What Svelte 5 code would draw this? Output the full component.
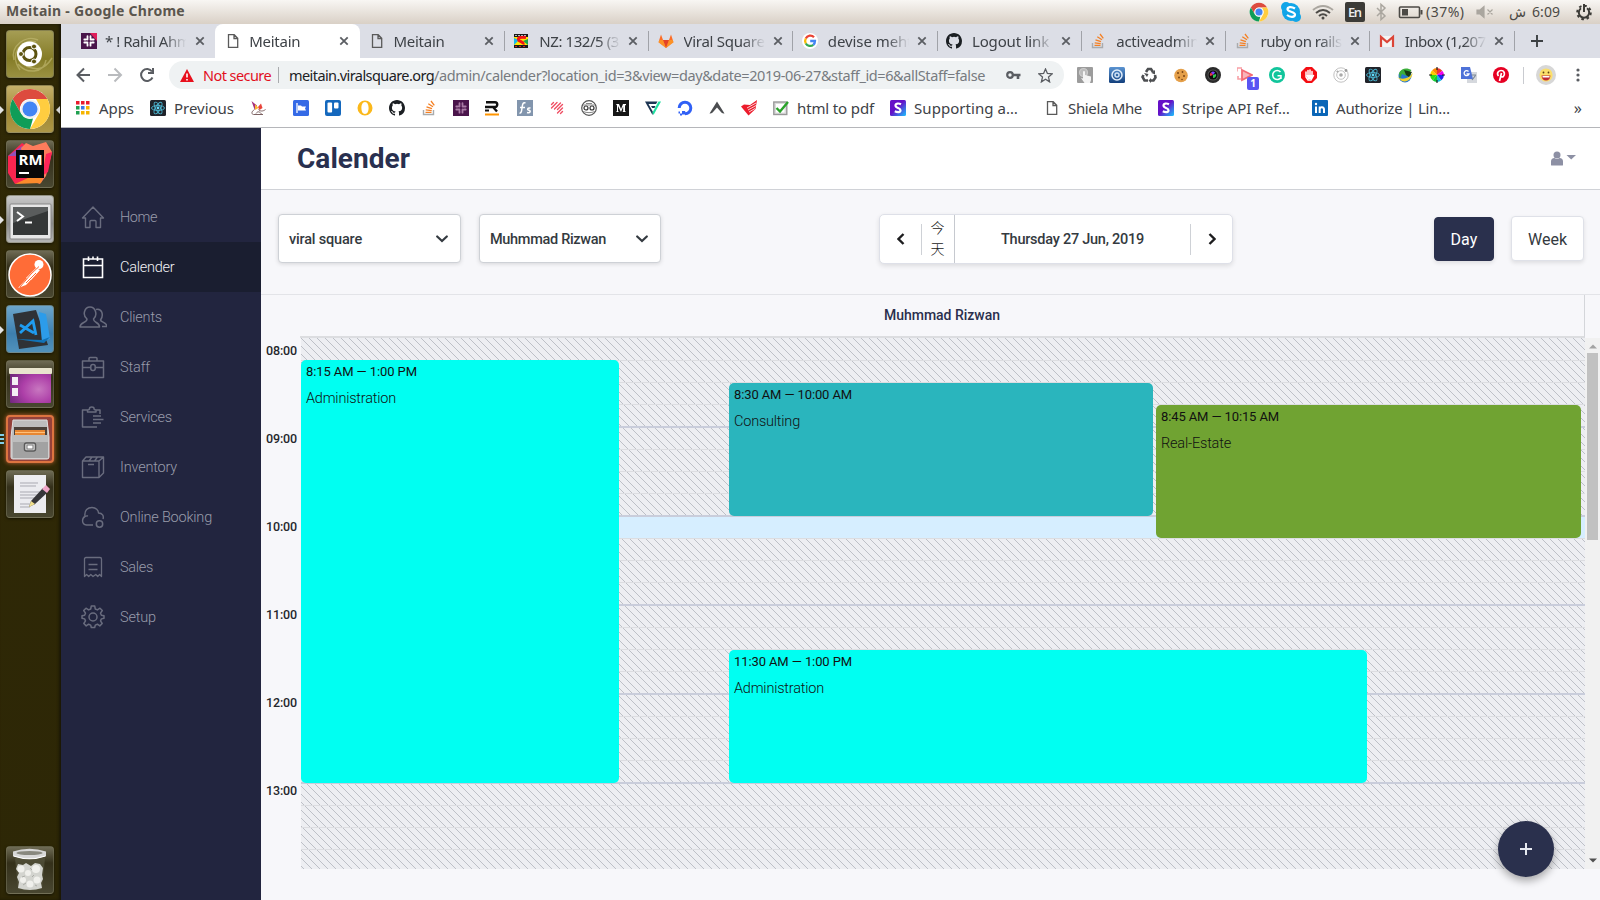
<script>
  // Spreads a label over a fixed width with letter spacing.
  function fit(node, width) {
    node.style.letterSpacing = '0px';
    const n = [...node.textContent].length;
    const natural = node.getBoundingClientRect().width;
    node.style.letterSpacing = (width - natural) / n + 'px';
  }

  const tabs = [
    { icon: 'slack', text: '* ! Rahil Ahmed', w: 102 },
    { icon: 'page', text: 'Meitain', w: 51, active: true },
    { icon: 'page', text: 'Meitain', w: 51 },
    { icon: 'sony', text: 'NZ: 132/5 (32)', w: 92 },
    { icon: 'gitlab', text: 'Viral Square /', w: 90 },
    { icon: 'google', text: 'devise mehtod', w: 103 },
    { icon: 'github', text: 'Logout link', w: 77 },
    { icon: 'so', text: 'activeadmin', w: 83 },
    { icon: 'so', text: 'ruby on rails -', w: 89 },
    { icon: 'gmail', text: 'Inbox (1,207)', w: 85 }
  ];

  const marks = [
    { x: 150, icon: 'react', text: 'Previous', tx: 174, w: 60 },
    { x: 250, icon: 'bird' }, { x: 293, icon: 'flag' }, { x: 325, icon: 'trello' },
    { x: 357, icon: 'ring' }, { x: 389, icon: 'github' }, { x: 421, icon: 'so' },
    { x: 453, icon: 'slack2' }, { x: 484, icon: 'rr' }, { x: 517, icon: 'fs' },
    { x: 549, icon: 'scratch' }, { x: 581, icon: 'face' }, { x: 613, icon: 'medium' },
    { x: 645, icon: 'vf' }, { x: 677, icon: 'ocean' }, { x: 709, icon: 'chev' },
    { x: 741, icon: 'redbird' },
    { x: 773, icon: 'check', text: 'html to pdf', tx: 797, w: 77 },
    { x: 890, icon: 'stripe', text: 'Supporting a…', tx: 914, w: 104 },
    { x: 1044, icon: 'page', text: 'Shiela Mhe', tx: 1068, w: 74 },
    { x: 1158, icon: 'stripe', text: 'Stripe API Ref…', tx: 1182, w: 108 },
    { x: 1312, icon: 'in', text: 'Authorize | Lin…', tx: 1336, w: 114 }
  ].map((m, i, a) => {
    const prev = a[i - 1];
    const end = prev ? (prev.text ? prev.tx + prev.w : prev.x + 16) : 134;
    return { ...m, gap: m.x - end };
  });

  const exts = ['hand', 'swirl', 'recycle', 'cookie', 'lens', 'capture', 'grammarly', 'stop', 'orbit', 'react', 'globe', 'wheel', 'translate', 'pin'];

  const nav = [
    { icon: 'home', text: 'Home', w: 37 },
    { icon: 'cal', text: 'Calender', w: 54.5, active: true },
    { icon: 'clients', text: 'Clients', w: 42 },
    { icon: 'staff', text: 'Staff', w: 30 },
    { icon: 'services', text: 'Services', w: 52 },
    { icon: 'inventory', text: 'Inventory', w: 57 },
    { icon: 'online', text: 'Online Booking', w: 92 },
    { icon: 'sales', text: 'Sales', w: 33 },
    { icon: 'setup', text: 'Setup', w: 36 }
  ];

  const launcher = ['ubuntu', 'chrome', 'rubymine', 'terminal', 'postman', 'vscode', 'workspace', 'files', 'gedit'];
  const hours = ['08:00', '09:00', '10:00', '11:00', '12:00', '13:00'];

  const events = [
    { x: 0, y: 22, w: 318, h: 423, color: '#00fff2', time: '8:15 AM — 1:00 PM', tw: 111, name: 'Administration', nw: 90 },
    { x: 428, y: 45, w: 424, h: 133, color: '#2ab5bd', time: '8:30 AM — 10:00 AM', tw: 118, name: 'Consulting', nw: 66 },
    { x: 855, y: 67, w: 425, h: 133, color: '#70a332', time: '8:45 AM — 10:15 AM', tw: 118, name: 'Real-Estate', nw: 70 },
    { x: 428, y: 312, w: 638, h: 133, color: '#00fff2', time: '11:30 AM — 1:00 PM', tw: 118, name: 'Administration', nw: 90 }
  ];
</script>

{#snippet chromeLogo()}
  <circle cx="24" cy="24" r="20" fill="#fff" />
  <path d="M6.7 14A20 20 0 0 1 41.3 14H24A10 10 0 0 0 15.3 29Z" fill="#dd4b3e" />
  <path d="M41.3 14A20 20 0 0 1 24 44L32.7 29A10 10 0 0 0 32.700 19L30 14Z" fill="#ffcd40" />
  <path d="M24 44A20 20 0 0 1 6.7 14L15.3 29A10 10 0 0 0 27 33.500Z" fill="#0f9d58" />
  <circle cx="24" cy="24" r="9.500" fill="#f1f1f1" />
  <circle cx="24" cy="24" r="7.500" fill="#4285f4" />
{/snippet}

{#snippet slackMark(c)}
  <g stroke={c} stroke-width="1.800" stroke-linecap="round">
    <path d="M6.500 3.200V6.500M3.300 6.500H5M9.500 3.200V5M9.500 6.500H12.700M3.300 9.500H6.500M6.500 11V12.700M11 9.500H12.700M9.500 9.500V12.700" />
  </g>
{/snippet}

{#snippet glyph(name)}
  <svg class="g16" viewBox="0 0 16 16" fill="none">
    {#if name === 'slack'}
      <rect width="16" height="16" fill="#4a154b" /><path d="M9 0H16V8Z" fill="#e01e5a" />
      {@render slackMark('#fff')}
    {:else if name === 'slack2'}
      <rect width="16" height="16" fill="#4a154b" />
      {@render slackMark('#a97ba5')}
    {:else if name === 'page'}
      <path d="M3.500 1.700H9.200L12.700 5.200V14.300H3.500Z M9 1.700V5.500H12.700" stroke="#5a5a5a" stroke-width="1.300" />
    {:else if name === 'sony'}
      <rect x="1" y="1" width="14" height="14" fill="#1a1a1a" /><rect x="1" y="4" width="14" height="8" fill="#ffe600" />
      <path d="M1 5L6 7L1 12Z" fill="#19b8e8" /><path d="M15 12L10 8L15 6Z" fill="#19a850" />
      <path d="M13 4.500C7 3.500 4 5 6 7.500C8 9 11 9 10 11.500" stroke="#f21515" stroke-width="3" />
      <path d="M2 2.500H14" stroke="#bbb" stroke-dasharray="2 1" /><path d="M2 13.500H14" stroke="#c22" stroke-dasharray="2 2" />
    {:else if name === 'gitlab'}
      <path d="M8 15L.5 9.300L3 1.500L5 7H11L13 1.500L15.500 9.300Z" fill="#fc6d26" />
      <path d="M8 15L5 7H11Z" fill="#e24329" /><path d="M.5 9.300L1.500 7H5L8 15ZM15.500 9.300L14.500 7H11L8 15Z" fill="#fca326" opacity=".7" />
    {:else if name === 'google'}
      <circle cx="8" cy="8" r="8" fill="#fff" />
      <g stroke-width="2.300"><path d="M12 4.200A5 5 0 0 0 3.800 5.500" stroke="#ea4335" /><path d="M3.800 5.500A5 5 0 0 0 3.800 10.500" stroke="#fbbc05" /><path d="M3.800 10.500A5 5 0 0 0 11.300 11.800" stroke="#34a853" /><path d="M11.300 11.800A5 5 0 0 0 13 8H8.200" stroke="#4285f4" /></g>
    {:else if name === 'github'}
      <path fill="#1b1f23" d="M8 0C3.580 0 0 3.580 0 8c0 3.540 2.290 6.530 5.470 7.590.4.070.55-.17.55-.38v-1.490c-2.010.37-2.530-.49-2.690-.94-.09-.23-.48-.94-.82-1.130-.28-.15-.68-.52-.01-.53.63-.01 1.080.58 1.230.82.72 1.210 1.870.87 2.330.66.07-.52.28-.87.51-1.070-1.780-.2-3.640-.89-3.640-3.950 0-.87.31-1.590.82-2.150-.08-.2-.36-1.020.08-2.120 0 0 .67-.21 2.200.82a7.600 7.600 0 0 1 4 0c1.530-1.040 2.200-.82 2.200-.82.44 1.100.16 1.920.08 2.120.51.56.82 1.270.82 2.150 0 3.070-1.870 3.750-3.650 3.950.29.25.54.73.54 1.480v2.200c0 .21.150.46.550.38A8 8 0 0 0 16 8c0-4.420-3.580-8-8-8Z" />
    {:else if name === 'so'}
      <path d="M2.500 10V14.500H12.500V10" stroke="#a9abad" stroke-width="1.400" />
      <path d="M4.500 12.300H10.500M4.700 9.800L10.700 10.600M5.500 6.900L11 8.700M7.300 3.700L12 6.800M10 1L13.300 5.300" stroke="#f48024" stroke-width="1.300" />
    {:else if name === 'gmail'}
      <rect x="1" y="3" width="14" height="11" fill="#f4f4f4" /><path d="M2 14V3.800L8 9L14 3.800V14" stroke="#db4437" stroke-width="2.200" />
    {:else if name === 'react'}
      <rect width="16" height="16" rx="1.500" fill="#20232a" />
      <g stroke="#4cb4cf" stroke-width=".9"><ellipse cx="8" cy="8" rx="6.500" ry="2.500" /><ellipse cx="8" cy="8" rx="6.500" ry="2.500" transform="rotate(60 8 8)" /><ellipse cx="8" cy="8" rx="6.500" ry="2.500" transform="rotate(120 8 8)" /></g>
      <circle cx="8" cy="8" r="1.400" fill="#61dafb" />
    {:else if name === 'bird'}
      <path d="M1.500 1L7 5.500L4.500 9.500Z" fill="#a5307e" /><path d="M5 4L8.500 8L5 10Z" fill="#fbb634" /><path d="M8 7L11 3.500L12.500 8L9.500 10Z" fill="#e8443a" />
      <path d="M4.500 9.500C1.500 11.500 1 14 3.500 14.500H13M8.500 9.500C10 11.500 13 11.500 15.500 9.500M6 13.500C8 10.500 10 12 11.500 14" stroke="#7d6262" stroke-width="1" />
    {:else if name === 'flag'}
      <rect width="16" height="16" rx="1.500" fill="#356ae6" /><path d="M4 3V13" stroke="#fff" stroke-width="1.300" /><path d="M5 5.500H8L9 6.500H13L12 8.500L13 10.500H5Z" fill="#fff" />
    {:else if name === 'trello'}
      <rect width="16" height="16" rx="2" fill="#1468bd" /><rect x="2.500" y="2.500" width="4.600" height="10" rx="1" fill="#fff" /><rect x="9" y="2.500" width="4.500" height="6" rx="1" fill="#fff" />
    {:else if name === 'ring'}
      <path fill-rule="evenodd" d="M8 .5A7.500 7.500 0 1 0 8 15.500A7.500 7.500 0 1 0 8 .5ZM8 2C10.500 2 11.600 5 11.600 8S10.500 14 8 14S4.400 11 4.400 8S5.500 2 8 2Z" fill="#fbb81b" />
    {:else if name === 'rr'}
      <path d="M2 2.200H11C14 2.200 14 7 11 7H1M9 7L13 11.500" stroke="#111" stroke-width="2.400" /><path d="M1 10.500H5" stroke="#111" stroke-width="2" /><path d="M1 14.500H15" stroke="#ff9500" stroke-width="2" />
    {:else if name === 'fs'}
      <rect width="16" height="16" fill="#8295ad" /><path d="M8.500 3C6 2 5.500 4 5 8S4 13.500 2.500 13M3 7.500H8M13.500 8C10 7.500 10 10 12 10.300S13.500 13.500 10 12.600" stroke="#fff" stroke-width="1.500" />
    {:else if name === 'scratch'}
      <g stroke="#ef4e63" stroke-width="1.400" stroke-linecap="round"><path d="M2.500 4.500L4.500 2.500M2.500 8L8 2.500M5.500 9L11.500 3M8.500 9.500L13.500 4.500M8.500 13L13.500 8M11.500 13.500L13.500 11.500" /></g>
    {:else if name === 'face'}
      <circle cx="8" cy="8" r="7.300" stroke="#555" stroke-width="1.200" /><path d="M2 5H14M2 11.500C6 13 10 13 14 11.500M5 3.500H11" stroke="#888" /><circle cx="5" cy="8" r="2" stroke="#333" stroke-width="1.200" /><circle cx="11" cy="8" r="2" stroke="#333" stroke-width="1.200" />
    {:else if name === 'medium'}
      <rect width="16" height="16" fill="#161616" /><path d="M3 4H6L8 9L10 4H13V5L12 5.500V11L13 12H9.500L10.200 11V6.500L8 12L5 6V11L6 12H3L4 11V5.500Z" fill="#fff" />
    {:else if name === 'vf'}
      <path d="M0 1.500H12.500L11 4H3.500L8 12L7.500 15Z" fill="#1c3553" /><path d="M6 6H10.500L9.500 8H7.200Z" fill="#1c3553" /><path d="M13.500 1.500H16L8.500 15L7.500 12.500Z" fill="#1ee0a0" />
    {:else if name === 'ocean'}
      <path d="M2.200 8A5.800 5.800 0 1 1 8 13.800" stroke="#3060f6" stroke-width="3" /><path d="M5 11H8.200V14.500H5ZM3 13.500H5V15.500H3ZM1.500 11.500H3V13.500H1.500Z" fill="#3060f6" />
    {:else if name === 'chev'}
      <path d="M8 1.500L15.500 13.500Q13 14 11.500 11.500L8 7.500L4.500 11.500Q3 14 .5 13.500Z" fill="#4b4d50" />
    {:else if name === 'redbird'}
      <path d="M0 6.500L3 4.500L9 5L16 0L14.500 9L7.500 15.500Z" fill="#ec1c2c" /><path d="M6 8L15 3M7 10L15 5.500M8 12L14 8.500" stroke="#fff" stroke-width=".8" />
    {:else if name === 'check'}
      <rect x=".8" y="2" width="13" height="12.500" fill="#dcdcdc" stroke="#999" stroke-width="1.400" /><rect x="3" y="4" width="8.500" height="8.500" fill="#fff" /><path d="M3.500 8L7 11.500L15 2" stroke="#29a329" stroke-width="2.400" />
    {:else if name === 'stripe'}
      <rect width="16" height="16" rx="1.500" fill="url(#stripeG)" /><path d="M11 4.300C8.500 3 5.500 3.300 5.500 5.600C5.500 8.500 10.500 7.500 10.500 10.200C10.500 12.500 7.500 12.600 4.800 11.300" stroke="#fff" stroke-width="2.200" />
    {:else if name === 'in'}
      <rect width="16" height="16" rx="1" fill="#0a66b7" /><path d="M4 6.500V13M7.700 13V6.500M7.700 9C8 6.500 12 6.500 12 9.500V13" stroke="#fff" stroke-width="2" /><circle cx="4" cy="4" r="1.200" fill="#fff" />
    {:else if name === 'hand'}
      <rect width="16" height="16" rx="1" fill="#9c9c9c" /><circle cx="6.500" cy="5.500" r="4" fill="#bbb" stroke="#ccc" stroke-width="1.200" /><path d="M6 4.500Q7 3.500 8 4.500V8L14 9.500V13L13 16H7.500L4 11L6 11.500Z" fill="#f4f4f4" />
    {:else if name === 'swirl'}
      <rect width="16" height="16" rx="1.500" fill="url(#swirlG)" /><circle cx="8" cy="8" r="5" stroke="#e2eefa" stroke-width="1.500" /><circle cx="8" cy="8" r="2" stroke="#cfe2f5" stroke-width="1.500" />
    {:else if name === 'recycle'}
      <path d="M5 5L7 2H10L12 5M2.500 8L1.500 10L3.500 13.500H7M14 8L14.500 10.500L12.500 13.500H10" stroke="#4d4f52" stroke-width="2.600" /><path d="M3 6L7.500 7L6 10ZM10.500 6L14 3L14 7.500ZM10 11V16L7.500 13.500Z" fill="#4d4f52" />
    {:else if name === 'cookie'}
      <circle cx="8" cy="8.500" r="6.800" fill="#e5a04a" /><g fill="#7b4513"><circle cx="5" cy="6" r="1" /><circle cx="9.500" cy="5" r=".9" /><circle cx="11" cy="9" r="1" /><circle cx="6" cy="10.500" r="1" /><circle cx="9" cy="12.500" r=".8" /></g>
    {:else if name === 'lens'}
      <circle cx="8" cy="8" r="8" fill="#2a2a2a" /><circle cx="8" cy="8" r="5.500" fill="#555" /><circle cx="8" cy="8" r="4.500" fill="#0c0c0c" /><path d="M8 8L6 5.500A3 3 0 0 1 10 5.500Z" fill="#7d3cff" /><path d="M8 8L11 7A3 3 0 0 1 8 11Z" fill="#33c950" /><path d="M8 8L5 9A3 3 0 0 1 6 5.500Z" fill="#ed3a48" />
    {:else if name === 'capture'}
      <path d="M0 4.500V1H5M1 9V12H4" stroke="#f8a0a6" stroke-width="1.600" /><path d="M5 3L15 8L5 13Z" stroke="#f46a75" stroke-width="1.800" fill="#f46a75" fill-opacity=".5" />
    {:else if name === 'grammarly'}
      <circle cx="8" cy="8" r="8" fill="#11c59b" /><path d="M11.500 5A4.500 4.500 0 1 0 12 10.500M8.500 8.800H12V12" stroke="#fff" stroke-width="1.500" />
    {:else if name === 'stop'}
      <path d="M5 0H11L16 5V11L11 16H5L0 11V5Z" fill="#f40d12" /><path d="M5 5V10L7 13H10L12.500 8.500M7 3.500V9M9 3V9M11 4.500V9" stroke="#fff" stroke-width="1.500" stroke-linecap="round" /><path d="M5 8H11V12H7Z" fill="#fff" />
    {:else if name === 'orbit'}
      <circle cx="8" cy="8" r="7.200" stroke="#c2c2c2" stroke-width="1" /><circle cx="8" cy="8" r="4.300" stroke="#c2c2c2" stroke-width="1" /><circle cx="8" cy="8" r="1.800" fill="#aaa" /><circle cx="13" cy="3.500" r="1.400" fill="#999" /><circle cx="4.500" cy="4.500" r="1.100" fill="#aaa" />
    {:else if name === 'globe'}
      <circle cx="8" cy="9" r="6.500" fill="#2677d0" /><path d="M2 6C5 0 11 1 14.500 3L10 9L5 7L3 12Z" fill="#3bae3a" /><path d="M0 10C5 13 12 12 15.500 6C15.500 11 10 16 5 14Z" fill="#f3d32d" /><path d="M7 3L15 5L12 10L9 8Z" fill="#173b10" />
    {:else if name === 'wheel'}
      <g transform="translate(1 1) scale(.875)"><path d="M8 8V0A8 8 0 0 1 14 3Z" fill="#e33" /><path d="M8 8L14 3A8 8 0 0 1 16 8Z" fill="#e0e" /><path d="M8 8H16A8 8 0 0 1 13 14Z" fill="#22e" /><path d="M8 8L13 14A8 8 0 0 1 8 16Z" fill="#1bd" /><path d="M8 8V16A8 8 0 0 1 3 14Z" fill="#1c3" /><path d="M8 8L3 14A8 8 0 0 1 0 8Z" fill="#3d1" /><path d="M8 8H0A8 8 0 0 1 2.500 2.500Z" fill="#fc0" /><path d="M8 8L2.500 2.500A8 8 0 0 1 8 0Z" fill="#f80" /></g><path d="M0 8H3M13 8H16M8 0V3M8 13V16" stroke="#222" stroke-width="1.200" />
    {:else if name === 'translate'}
      <rect x="6" y="5" width="10" height="11" fill="#d5d8dd" /><path d="M0 0H9L12 12H0Z" fill="#4e72d8" /><path d="M7.500 4.500A2.500 2.500 0 1 0 8 7H5.500" stroke="#fff" stroke-width="1.300" /><path d="M10.500 8H15M11 13L14.500 8.500" stroke="#7b8796" stroke-width="1.200" />
    {:else if name === 'pin'}
      <circle cx="8" cy="8" r="8" fill="#e60023" /><path d="M5.500 9C3 6 6 3.300 8.500 3.500C12 3.700 12 8 10.300 9.500C9 10.500 7.800 9.600 7.800 9M8.500 6L6.500 14" stroke="#fff" stroke-width="1.700" />
    {/if}
  </svg>
{/snippet}

{#snippet navIcon(name)}
  <svg class="nico" viewBox="0 0 28 24" fill="none" stroke="currentColor" stroke-width="1.600" stroke-linejoin="round">
    {#if name === 'home'}
      <path d="M3.500 13L14 2L24.500 13H21.500V22.500H17V16.500Q17 15.500 16 15.500H12Q11 15.500 11 16.500V22.500H6.500V13Z" stroke-width="1.400" />
    {:else if name === 'cal'}
      <path d="M4.500 4H23.500V22.500H4.500ZM4.500 10.500H23.500M9.500 1.500V6M14 1.500V4M18.500 1.500V6" stroke-linejoin="miter" />
    {:else if name === 'clients'}
      <path d="M8 14C3 10 5.500 2 11 2S19 10 14.500 14C14.500 18 20.500 17 20.500 22H1C1 17 8 18 8 14ZM17 4.500C23 3 25 10 21.500 15C22 17.500 27.500 17 28 21.500H23" stroke-width="1.500" />
    {:else if name === 'staff'}
      <path d="M3.500 6H24.500V22.500H3.500ZM10 6V3.500Q10 2.500 11 2.500H17Q18 2.500 18 3.500V6M3.500 12.500H11.500M16.500 12.500H24.500" stroke-width="1.500" /><rect x="11.800" y="9.500" width="4.400" height="6" rx="2" stroke-width="1.500" />
    {:else if name === 'services'}
      <path d="M18 22H3.500V5H9M16 5H21V9M8.500 7H17V5Q15 5 15 3.500Q15 2 12.800 2T10.500 3.500Q10.500 5 8.500 5ZM14 11H22M14 14.500H24.500M14 18H22" stroke-width="1.500" />
    {:else if name === 'inventory'}
      <path d="M3.500 6H20V22.500H3.500ZM3.500 6L7 2H24.500L20 6M24.500 2V18L20 22.500M10 6L13 2M15.500 6L18.500 2M9 9.500H15" stroke-width="1.400" />
    {:else if name === 'online'}
      <path d="M14 20H7.500C2 19 3 13 6 11.500C5 5 9 2.500 13 2.500S19.500 5.500 19.500 8C23.500 8 25 11 24 14" stroke-width="1.400" /><circle cx="20.500" cy="19" r="3.200" stroke-width="1.500" /><path d="M6 11.500Q7.500 10.500 9 11" stroke-width="1.400" />
    {:else if name === 'sales'}
      <path d="M5.500 21.500V4Q5.500 2.500 7 2.500H21Q22.500 2.500 22.500 4V21.500L20.600 19.500L18.700 21.500L16.800 19.500L14 21.500L11.800 19.500L9.700 21.500L7.600 19.500ZM9.500 9.500H18.500M9.500 14.500H18.500" stroke-width="1.300" />
    {:else if name === 'setup'}
      <path d="M12.300 2H15.700L16.300 5L18.400 5.900L21 4.200L23.300 6.500L21.500 9.200L22.400 11.300L25 11.800V14.200L22.400 14.900L21.500 16.900L23.200 19.500L20.800 21.900L18.400 20.200L16.300 21.100L15.700 23.500H12.300L11.700 21.100L9.600 20.200L7.200 21.900L4.800 19.500L6.500 16.900L5.600 14.900L3 14.200V11.800L5.600 11.300L6.500 9.200L4.700 6.500L7 4.200L9.600 5.900L11.700 5Z" stroke-width="1.500" transform="translate(0 -1)" /><circle cx="14" cy="12" r="4" stroke-width="1.500" />
    {/if}
  </svg>
{/snippet}

{#snippet launchIcon(name)}
  <svg viewBox="0 0 48 48" width="48" height="48" fill="none">
    {#if name === 'ubuntu'}
      <path d="M8 30C4 16 20 4 32 10M14 40C2 24 16 8 30 12M40 30C38 44 20 44 12 34M46 28C36 44 26 38 20 36" stroke="#c5bd77" stroke-opacity=".6" stroke-width="1.500" />
      <circle cx="23.500" cy="24" r="12.500" fill="#fff" /><circle cx="23.500" cy="24" r="6.500" stroke="#5c5310" stroke-width="3" />
      <g fill="#5c5310" stroke="#fff"><circle cx="15" cy="24" r="2.500" /><circle cx="28" cy="16.500" r="2.500" /><circle cx="28" cy="31.500" r="2.500" /></g>
    {:else if name === 'chrome'}
      {@render chromeLogo()}
    {:else if name === 'rubymine'}
      <path d="M2 16L16 3L30 12L24 40L9 44L2 33Z" fill="#f9254f" /><path d="M2 16L16 6L22 16Z" fill="#9350b8" /><path d="M15 8L20 3L27 6L40 2L46 12L40 36L34 44L22 40Z" fill="#fd7c5c" /><path d="M40 14L46 12L42 32L36 36Z" fill="#ff2458" /><path d="M9 44L22 38L37 36L35 43Z" fill="#fb8b2c" />
      <rect x="10" y="10" width="28" height="28" fill="#080808" /><rect x="13" y="32" width="10" height="2" fill="#fff" />
      <text x="12.500" y="24.500" class="rm">RM</text>
    {:else if name === 'terminal'}
      <rect x="4" y="9" width="41" height="35" rx="1" fill="#e6e6e6" stroke="#888" /><rect x="7" y="12" width="35" height="28" fill="#343737" /><path d="M7 12H42V16L7 28Z" fill="#5a5d5d" /><path d="M11 17L17 21.500L11 26M19 27.500H26" stroke="#fff" stroke-width="2" />
    {:else if name === 'postman'}
      <circle cx="24" cy="25" r="21" fill="#ff6c37" stroke="#fff" stroke-width="1.500" /><path d="M12 38L22 27L28 23L33 21L20 35Z" fill="#fff" /><circle cx="33" cy="14.500" r="4.500" fill="#fff" /><path d="M20 28L30 18L34 20L25 30Z" fill="#fff" /><path d="M14 37L25 24L33 16.500M20 33L30 23" stroke="#ff6c37" stroke-width="1" />
    {:else if name === 'vscode'}
      <path d="M7 9L30 5L42 40L13 44Z" fill="#2f3236" /><path d="M33 7L40 9L44 34L36 37Z" fill="#2c9cea" /><path d="M10 34L36 35L44 32L38 38Z" fill="#1173b8" /><path d="M14 20L28 28M14 28L27 16L30 30" stroke="#1f9cf0" stroke-width="2.800" />
    {:else if name === 'workspace'}
      <rect x="4" y="9" width="41" height="34" rx="1" fill="url(#purp)" /><rect x="3" y="8" width="43" height="6" rx="1" fill="#e8e4ce" /><rect x="6" y="17" width="6" height="8" fill="#f4eef4" /><rect x="6" y="28" width="6" height="8" fill="#f4eef4" />
    {:else if name === 'files'}
      <path d="M7 5H41L43 22V42Q43 44 41 44H7Q5 44 5 42V22Z" fill="#bdbdbd" stroke="#e0e0e0" /><rect x="8" y="12" width="33" height="10" fill="#4b4139" /><path d="M9 15H39V21H9Z" fill="#e78733" /><path d="M9 17.500H39" stroke="#ffc07a" stroke-width="1" />
      <path d="M7 20H42V43H7Z" fill="#a2a2a2" /><path d="M7 20H42V27H7Z" fill="#bdbdbd" /><rect x="18.500" y="28" width="11" height="8" rx="2" fill="#ddd" stroke="#5a5a5a" stroke-width="1.500" /><rect x="21" y="30" width="6" height="4" fill="#fff" stroke="#777" />
    {:else if name === 'gedit'}
      <rect x="8" y="5" width="32" height="38" fill="#ececf0" /><path d="M14 13H32M14 16H30M14 22H35M14 25H34M14 28H30M14 34H29M14 37H24" stroke="#a9a9b1" stroke-width="1" /><path d="M23 37L25 31L37 18L42 22L29 34Z" fill="#36363a" /><path d="M23 37L25 31L29 34Z" fill="#f1e08d" /><path d="M36 19L40 15L44 19L41 23Z" fill="#efa6c8" />
    {:else if name === 'trash'}
      <path d="M9 12L12 43Q24 46 36 43L39 12Z" fill="#55543f" fill-opacity=".7" /><path d="M10 23L12 18L17 19L20 17L25 20L29 17L34 18L37 22L36 29L37 33L35 37L36 42Q24 46 12 42L13 36L11 31L13 27Z" fill="#d3d4cf" />
      <g fill="#f0f0ec"><circle cx="15" cy="23" r="3.500" /><circle cx="30" cy="23" r="4" /><circle cx="22" cy="27" r="3" /><circle cx="17" cy="34" r="3" /><circle cx="31" cy="34" r="3.500" /><circle cx="24" cy="38" r="3.500" /></g><path d="M19 30L16 31M26 31L28 29M20 37L17 39M29 39L31 40M26 24L24 22" stroke="#acada7" />
      <path d="M7 5.500Q23.500 0 40 5.500V10Q23.500 16 7 10Z" fill="#d8d8d8" /><ellipse cx="23.500" cy="7" rx="13" ry="2" fill="#88887e" /><path d="M7.500 10Q23.500 15.500 39.500 10" stroke="#fff" stroke-width="1.200" />
    {/if}
  </svg>
{/snippet}

<div class="desktop">
  <svg class="defs" width="0" height="0">
    <defs>
      <linearGradient id="stripeG" x1="0" y1="0" x2="1" y2="1"><stop offset=".45" stop-color="#6510c8" /><stop offset="1" stop-color="#19c5ff" /></linearGradient>
      <linearGradient id="swirlG" x1="0" y1="0" x2="0" y2="1"><stop stop-color="#5b94d2" /><stop offset="1" stop-color="#123f7c" /></linearGradient>
      <radialGradient id="purp" cx=".7" cy=".6" r=".8"><stop offset="0" stop-color="#c877c0" /><stop offset=".5" stop-color="#ad3fa8" /><stop offset="1" stop-color="#70277c" /></radialGradient>
    </defs>
  </svg>

  <header class="panel">
    <span class="wtitle" use:fit={179}>Meitain - Google Chrome</span>
    <svg class="tray" width="352" height="24" fill="none">
      <g transform="translate(-.3 .8) scale(.47)">{@render chromeLogo()}</g>
      <circle cx="43" cy="12" r="9" fill="#11a5e8" /><circle cx="38" cy="7" r="5" fill="#11a5e8" /><circle cx="48" cy="17" r="5" fill="#11a5e8" />
      <path d="M47 8.500C43 6 39.500 7 39.500 9.300C39.500 12 47 11.500 47 14.500S42 17.500 39 15" stroke="#fff" stroke-width="2.200" />
      <g stroke="#4c4a46" stroke-width="2"><path d="M65 10Q75 2 85 10" stroke="#aaa69f" /><path d="M68 13Q75 7 82 13M71 16Q75 12.500 79 16" /></g><circle cx="75" cy="18" r="1.500" fill="#4c4a46" />
      <rect x="97" y="2" width="20" height="20" rx="2" fill="#3c3b37" /><text x="100" y="17" class="en" textLength="14">En</text>
      <path d="M129 8L137 16L133 19.500V4.500L137 8L129 16" stroke="#aaa69f" stroke-width="1.500" />
      <rect x="151.500" y="7" width="20" height="10.500" rx="1" stroke="#4c4a46" stroke-width="1.600" /><rect x="154" y="9" width="6" height="6.500" fill="#4c4a46" /><path d="M173.500 10V14.500" stroke="#4c4a46" stroke-width="2" />
      <text x="178" y="17" class="tt" textLength="38">(37%)</text>
      <path d="M229 10H232L236 6.500V17.500L232 14H229ZM239.500 9.500L244.500 14.500M244.500 9.500L239.500 14.500" fill="#aaa69f" stroke="#aaa69f" stroke-width="1.200" />
      <text x="261" y="17" class="tt" textLength="21">ش</text>
      <text x="284" y="17" class="tt" textLength="28">6:09</text>
      <circle cx="336" cy="12.500" r="6.800" stroke="#3c3b37" stroke-width="2" stroke-dasharray="2.600 2.740" />
      <path d="M333 8.300A5.200 5.200 0 1 0 339 8.300M336 4V12" stroke="#3c3b37" stroke-width="2" />
    </svg>
  </header>

  <div class="below">
    <aside class="launcher">
      {#each launcher as l}
        <div class="tile {l}">
          {@render launchIcon(l)}
          {#if l === 'chrome' || l === 'terminal' || l === 'vscode'}<i class="pip"></i>{/if}
          {#if l === 'chrome'}<i class="pip right"></i>{/if}
          {#if l === 'files'}<i class="bars"></i>{/if}
        </div>
      {/each}
      <div class="tile trash">{@render launchIcon('trash')}</div>
    </aside>

    <div class="browser">
      <div class="tabs">
        {#each tabs as t, i}
          <div class="tab" class:active={t.active} class:sep={i >= 2} class:late={i >= 3}>
            {@render glyph(t.icon)}
            <span class="tlabel"><span use:fit={t.w}>{t.text}</span></span>
            <svg width="10" height="10" viewBox="0 0 10 10"><path d="M1.300 1.300L8.700 8.700M8.700 1.300L1.300 8.700" stroke="#5b5e63" stroke-width="1.800" /></svg>
          </div>
        {/each}
        <svg class="plus" width="12" height="12"><path d="M6 0V12M0 6H12" stroke="#3c4043" stroke-width="1.900" /></svg>
      </div>

      <div class="toolbar">
        <svg class="navs" width="84" height="18" fill="none" stroke-width="2">
          <path d="M14 9H1.500M8 2.500L1.500 9L8 15.500" stroke="#5a5d62" /><path d="M32 9H45M38.500 2.500L45 9L38.500 15.500" stroke="#b9bbbe" />
          <path d="M76 5.500A6 6 0 1 0 76.500 11.500M77 2V7H72" stroke="#5a5d62" />
        </svg>
        <div class="omni">
          <svg width="14" height="13"><path d="M7 0L14 13H0Z" fill="#e8101d" /><path d="M7 4.500V8.500M7 10V11.500" stroke="#fff" stroke-width="1.600" /></svg>
          <span class="ns"><span use:fit={68}>Not secure</span></span>
          <span class="url"><span use:fit={145} class="host">meitain.viralsquare.org</span><span use:fit={551}>/admin/calender?location_id=3&amp;view=day&amp;date=2019-06-27&amp;staff_id=6&amp;allStaff=false</span></span>
          <svg class="key" width="15" height="10" fill="none" stroke="#5a5d62"><circle cx="4" cy="5" r="2.800" stroke-width="2.200" /><path d="M7 5H14.500M12 5V9" stroke-width="2.600" /></svg>
          <svg width="15" height="15" viewBox="0 0 15 15"><path d="M7.500 1L9.400 5.500L14.200 5.900L10.500 9.100L11.600 13.900L7.500 11.300L3.400 13.900L4.500 9.100L.8 5.900L5.600 5.500Z" fill="none" stroke="#5a5d62" stroke-width="1.300" /></svg>
        </div>
        <div class="exts">
          {#each exts as e}
            <span class="ext">{@render glyph(e)}{#if e === 'capture'}<b>1</b>{/if}</span>
          {/each}
        </div>
        <i class="tsep"></i>
        <svg class="avatar" width="20" height="20"><circle cx="10" cy="10" r="10" fill="#d7d7d7" /><circle cx="10" cy="10" r="6.600" fill="#fbdf6b" /><path d="M5.500 10.500H14.500Q14 15.500 10 15.500T5.500 10.500Z" fill="#c22a33" /><path d="M6.500 11H13.500V12.500H6.500Z" fill="#fff" /><circle cx="7.500" cy="7.500" r=".9" fill="#5d4012" /><circle cx="12.500" cy="7.500" r=".9" fill="#5d4012" /></svg>
        <svg width="4" height="16"><g fill="#5a5d62"><circle cx="2" cy="3" r="1.600" /><circle cx="2" cy="8" r="1.600" /><circle cx="2" cy="13" r="1.600" /></g></svg>
      </div>

      <div class="marks">
        <svg width="14" height="14"><g><rect width="3.500" height="3.500" fill="#ea1b2d" /><rect x="5" width="3.500" height="3.500" fill="#ea1b2d" /><rect x="10" width="3.500" height="3.500" fill="#ea1b2d" /><rect y="5" width="3.500" height="3.500" fill="#1fa050" /><rect x="5" y="5" width="3.500" height="3.500" fill="#3b78e7" /><rect x="10" y="5" width="3.500" height="3.500" fill="#f5b400" /><rect y="10" width="3.500" height="3.500" fill="#1fa050" /><rect x="5" y="10" width="3.500" height="3.500" fill="#f5b400" /><rect x="10" y="10" width="3.500" height="3.500" fill="#f5b400" /></g></svg>
        <span class="mt apps"><span use:fit={35}>Apps</span></span>
        {#each marks as m}
          <span class="mark" style="margin-left:{m.gap}px">{@render glyph(m.icon)}{#if m.text}<span class="mt" style="width:{m.w}px"><span use:fit={m.w}>{m.text}</span></span>{/if}</span>
        {/each}
        <span class="more">»</span>
      </div>

      <div class="app">
        <nav>
          {#each nav as n}
            <div class="item" class:on={n.active}>
              {@render navIcon(n.icon)}
              <span use:fit={n.w}>{n.text}</span>
            </div>
          {/each}
        </nav>

        <main>
          <div class="head">
            <h1 use:fit={113}>Calender</h1>
            <svg width="26" height="16"><g fill="#8d90a4"><circle cx="6" cy="4" r="3.500" /><path d="M0 14V10.500Q0 7 3.500 7Q6 9 8.500 7Q12 7 12 10.500V14Q12 14.500 11 14.500H1Q0 14.500 0 14Z" /><path d="M15.500 4H25L20.200 8.500Z" /></g></svg>
          </div>

          <div class="filters">
            <div class="select s1"><span use:fit={73}>viral square</span><svg width="12" height="8"><path d="M1.200 1.500L6 6L10.800 1.500" fill="none" stroke="#343a40" stroke-width="2.200" stroke-linecap="round" /></svg></div>
            <div class="select s2"><span use:fit={116}>Muhmmad Rizwan</span><svg width="12" height="8"><path d="M1.200 1.500L6 6L10.800 1.500" fill="none" stroke="#343a40" stroke-width="2.200" stroke-linecap="round" /></svg></div>
            <div class="dates">
              <div class="arrow"><svg width="8" height="12"><path d="M6.500 1L1.500 6L6.500 11" fill="none" stroke="#1d1d1f" stroke-width="2.400" /></svg></div>
              <i class="short"></i>
              <div class="today">今天</div>
              <div class="date"><span use:fit={143}>Thursday 27 Jun, 2019</span></div>
              <i class="short"></i>
              <div class="arrow"><svg width="8" height="12"><path d="M1.500 1L6.500 6L1.500 11" fill="none" stroke="#1d1d1f" stroke-width="2.400" /></svg></div>
            </div>
            <div class="btn day"><span use:fit={27}>Day</span></div>
            <div class="btn week"><span use:fit={39}>Week</span></div>
          </div>

          <div class="colhead"><div><span use:fit={116}>Muhmmad Rizwan</span></div></div>

          <div class="board">
            <div class="hours">{#each hours as h}<div><span use:fit={31}>{h}</span></div>{/each}</div>
            <div class="grid">
              <svg class="hatch" width="1284" height="531" shape-rendering="crispEdges">
                <defs>
                  <pattern id="hatch" width="8" height="8" patternUnits="userSpaceOnUse">
                    {#each [0, 1, 2, 3, 4, 5, 6, 7] as k}<rect x={k} y={k} width="1" height="1" fill="#bdc0c7" />{/each}
                  </pattern>
                </defs>
                <rect width="1284" height="531" fill="#edeef2" />
                <rect width="1284" height="531" fill="url(#hatch)" />
              </svg>
              {#each hours as h}
                <div class="hour"><i></i><i></i><i></i><i></i></div>
              {/each}
              <div class="free"></div>
              {#each events as e}
                <div class="event" style="left:{e.x}px;top:{e.y}px;width:{e.w}px;height:{e.h}px;background:{e.color}">
                  <div class="time"><span use:fit={e.tw}>{e.time}</span></div>
                  <div class="name"><span use:fit={e.nw}>{e.name}</span></div>
                </div>
              {/each}
            </div>
            <div class="scroll">
              <svg width="8" height="5"><path d="M4 .5L8 4.500H0Z" fill="#a3a3a3" /></svg>
              <i></i>
              <svg width="8" height="5"><path d="M4 4.500L8 .5H0Z" fill="#505050" /></svg>
            </div>
          </div>

          <div class="fab"><svg width="12" height="12"><path d="M6 0V12M0 6H12" stroke="#e6e9f0" stroke-width="2" /></svg></div>
        </main>
      </div>
    </div>
  </div>
</div>

<style>
  :global(body) { overflow: hidden; }
  .desktop { width: 1600px; height: 900px; display: flex; flex-direction: column; overflow: hidden; font-family: "Noto Sans", sans-serif; }
  .desktop :global(*) { box-sizing: border-box; }
  .defs { position: absolute; }
  svg { flex: none; display: block; }
  span { white-space: nowrap; }
  .panel { height: 24px; flex: none; display: flex; align-items: center; padding-left: 6px; background: linear-gradient(#f8f6f3, #d9d0c6); }
  .wtitle { font-weight: 700; font-size: 14px; line-height: 20px; color: #5b564e; margin-bottom: 2px; }
  .tray { margin-left: auto; margin-right: 0; }
  .en { font: 600 13px "Open Sans", sans-serif; fill: #eee; }
  .tt { font: 14px "Noto Sans", "DejaVu Sans", sans-serif; fill: #4c4a46; }
  .below { display: flex; height: 876px; }

  .launcher { width: 61px; flex: none; display: flex; flex-direction: column; gap: 7px; padding: 6px 0 6px 6px; background: linear-gradient(#302906, #2d2706); box-shadow: inset -2px 0 3px #1a1705; }
  .tile { position: relative; width: 48px; height: 48px; border-radius: 4px; border: 1px solid #77745a88; background: linear-gradient(#6e6b55, #34301a 35%, #494731); box-shadow: 0 1px 3px #0008; flex: none; }
  .tile svg { margin: -1px; }
  .tile.ubuntu { background: linear-gradient(#a59d54, #857c27 60%, #9a9141); }
  .tile.chrome { background: linear-gradient(#c5b06a, #a08834 60%, #ad9747); }
  .tile.terminal { background: linear-gradient(#c9c9c9, #8b8b8b 60%, #b5b5b5); }
  .tile.vscode { background: linear-gradient(#6ca6cb, #3d7fae 60%, #5192bb); }
  .tile.files { background: #94413a; border: 2px solid #dd7440; box-shadow: 0 0 4px #c56436; }
  .tile.files svg { margin: -2px; }
  .tile.trash { margin-top: auto; }
  .pip { position: absolute; left: -7px; top: 20px; border: 4px solid transparent; border-left-color: #e4e4e4; border-right: 0; }
  .pip.right { left: auto; right: -7px; border: 4px solid transparent; border-right-color: #d4d4d4; border-left: 0; }
  .bars { position: absolute; left: -8px; top: 17px; width: 4px; height: 11px; background: repeating-linear-gradient(#80cde8 0 2px, transparent 2px 4px); }
  .rm { font: 700 15px "Open Sans", sans-serif; fill: #fff; }

  .browser { width: 1539px; flex: none; display: flex; flex-direction: column; background: #fff; }
  .tabs { height: 34px; display: flex; background: #dcdee6; padding-left: 10px; flex: none; }
  .tab { position: relative; width: 144.250px; display: flex; align-items: center; padding: 0 0 1px 9.500px; flex: none; }
  .tab.active { background: #fff; border-radius: 8px 8px 0 0; }
  .tab.sep::after { content: ""; position: absolute; right: -1px; top: 7px; height: 20px; width: 1px; background: #a0a2a8; }
  .tab svg:first-child { margin-right: 8.500px; }
  .tab.late svg:first-child { margin-right: 10px; }
  .tab.late .tlabel { margin-right: 5px; }
  .g16 { width: 16px; height: 16px; }
  .tlabel { width: 84px; overflow: hidden; margin-right: 6px; font-size: 15px; line-height: 22px; color: #3e4247; -webkit-mask: linear-gradient(90deg, #000 70%, transparent 97%); mask: linear-gradient(90deg, #000 70%, transparent 97%); }
  .tlabel span, .mt span, .ns span { display: inline-block; }
  .plus { margin: 11px 0 0 17px; }

  .toolbar { height: 35px; display: flex; align-items: center; padding: 0 0 1px 15px; flex: none; }
  .omni { width: 895px; height: 28px; border-radius: 14px; background: #eff2f3; display: flex; align-items: center; margin-left: 9px; padding-left: 11px; font-size: 14.500px; }
  .ns { color: #e2101e; margin-left: 9px; width: 76px; border-right: 1px solid #a9abae; line-height: 16px; }
  .url { display: flex; margin-left: 10px; width: 695px; color: #777b80; }
  .host { color: #202124; }
  .key { margin: 0 17px 0 22px; }
  .exts { display: flex; gap: 16px; margin-left: 13px; }
  .ext { position: relative; display: block; }
  .ext b { position: absolute; left: 10px; top: 10px; width: 12px; height: 13px; border-radius: 2px; background: #5a55f2; color: #fff; font: 700 10px/13px "Noto Sans", sans-serif; text-align: center; }
  .tsep { width: 1px; height: 17px; background: #c9cbd0; margin: 0 12px 0 14px; }
  .avatar { margin-right: 20px; }

  .marks { height: 35px; flex: none; display: flex; align-items: center; padding: 0 18px 4px 15px; border-bottom: 1px solid #b5b6ba; font-size: 15px; color: #3e4247; }
  .mark { display: flex; align-items: center; gap: 8px; flex: none; }
  .mt { line-height: 22px; margin-bottom: 1px; }
  .mt.apps { width: 35px; margin-left: 9px; }
  .more { margin-left: auto; font-size: 16px; }

  .app { flex: 1; display: flex; font-family: Roboto, sans-serif; }
  nav { width: 200px; flex: none; background: #22253f; padding-top: 64px; }
  .item { height: 50px; display: flex; align-items: center; padding-left: 18px; color: #696c7e; }
  .item span { margin-left: 13px; font-size: 14.500px; font-weight: 300; color: #999cab; }
  .item.on { background: #1a1e30; color: #fff; }
  .item.on span { color: #f2f3f6; }
  .nico { width: 28px; height: 24px; }

  main { position: relative; width: 1339px; flex: none; background: #f7f7fa; display: flex; flex-direction: column; }
  .head { height: 62px; flex: none; background: #fff; border-bottom: 1px solid #d0d2d7; display: flex; align-items: center; justify-content: space-between; padding: 0 23px 0 36px; }
  h1 { margin: 0; font-size: 28px; font-weight: 700; color: #29304f; white-space: nowrap; line-height: 30px; }
  .filters { height: 105px; flex: none; display: flex; padding: 24px 0 0 17px; border-bottom: 1px solid #e3e4e8; font-size: 14.500px; font-weight: 500; color: #343a40; }
  .filters > div { flex: none; }
  .select { height: 49px; background: #fff; border: 1px solid #ced1d6; border-radius: 4px; box-shadow: 0 1px 4px #0002; display: flex; align-items: center; justify-content: space-between; padding: 1px 12px 0 10px; }
  .s1 { width: 183px; }
  .s2 { width: 182px; margin-left: 18px; }
  .dates { width: 354px; height: 50px; margin-left: 218px; background: #fff; border: 1px solid #dee0e8; border-radius: 5px; box-shadow: 0 2px 5px #0000001c; display: flex; align-items: center; }
  .arrow { width: 41px; display: flex; justify-content: center; }
  .short { width: 1px; height: 31px; background: #ced1d6; }
  .today { width: 33px; height: 48px; padding: 2px 8.500px; border-right: 1px solid #c6c9cf; font: 14px/21px "Noto Sans CJK SC", sans-serif; font-weight: 300; word-break: break-all; color: #222; }
  .date { flex: 1; text-align: center; }
  .date span, .colhead span { display: inline-block; }
  .btn { height: 45px; margin-top: 2px; border-radius: 4px; border: 1px solid #dfe1e8; box-shadow: 0 2px 4px #0000001a; display: flex; align-items: center; justify-content: center; font-size: 16px; font-weight: 400; background: #fff; padding-top: 1px; }
  .day { width: 60px; background: #2a304d; border-color: #2a304d; color: #fff; margin-left: 201px; height: 44px; margin-top: 3px; padding-top: 0; }
  .week { width: 73px; margin-left: 17px; }
  .colhead { height: 43px; flex: none; display: flex; }
  .colhead div { width: 1285px; flex: none; margin-left: 39px; padding-top: 11px; text-align: center; font-size: 14px; font-weight: 500; line-height: 19px; color: #2a2f4d; border-right: 1px solid #d4d6da; border-bottom: 2px solid #dcdde0; }
  .board { height: 531px; display: flex; }
  .hours { width: 40px; flex: none; padding: 4px 0 0 5px; font-size: 12.500px; font-weight: 500; line-height: 18px; color: #25282c; }
  .hours div { height: 88px; }
  .grid { position: relative; width: 1284px; flex: none; overflow: hidden; margin-top: -1px; height: 532px; }
  .hatch { position: absolute; top: 1px; left: 0; }
  .hour { position: relative; height: 89px; display: grid; grid-template-rows: 23px 22px 22px 22px; }
  .hour i { border-bottom: 1px solid #dcdde1; transform: translateY(1px); }
  .hour i:last-child { border-bottom: 2px solid #c9cddb; transform: translateY(2px); }
  .free { position: absolute; left: 0; top: 180px; width: 100%; height: 21px; background: #d6eeff; }
  .event { position: absolute; border-radius: 5px; margin-top: 1px; padding: 4px 5px; color: #111; }
  .time { font-size: 13px; line-height: 16px; }
  .name { font-size: 14.500px; line-height: 20px; font-weight: 300; margin-top: 9px; }
  .event span { display: inline-block; }
  .scroll { width: 15px; flex: none; background: #f1f1f1; display: flex; flex-direction: column; align-items: center; padding: 6px 0 6px; }
  .scroll i { width: 11px; height: 187px; background: #c1c1c1; margin: 4px 0 auto; }
  .fab { position: absolute; left: 1237px; top: 693px; width: 56px; height: 56px; border-radius: 50%; background: #2a304d; box-shadow: 0 4px 8px #0005; display: flex; align-items: center; justify-content: center; }
</style>
